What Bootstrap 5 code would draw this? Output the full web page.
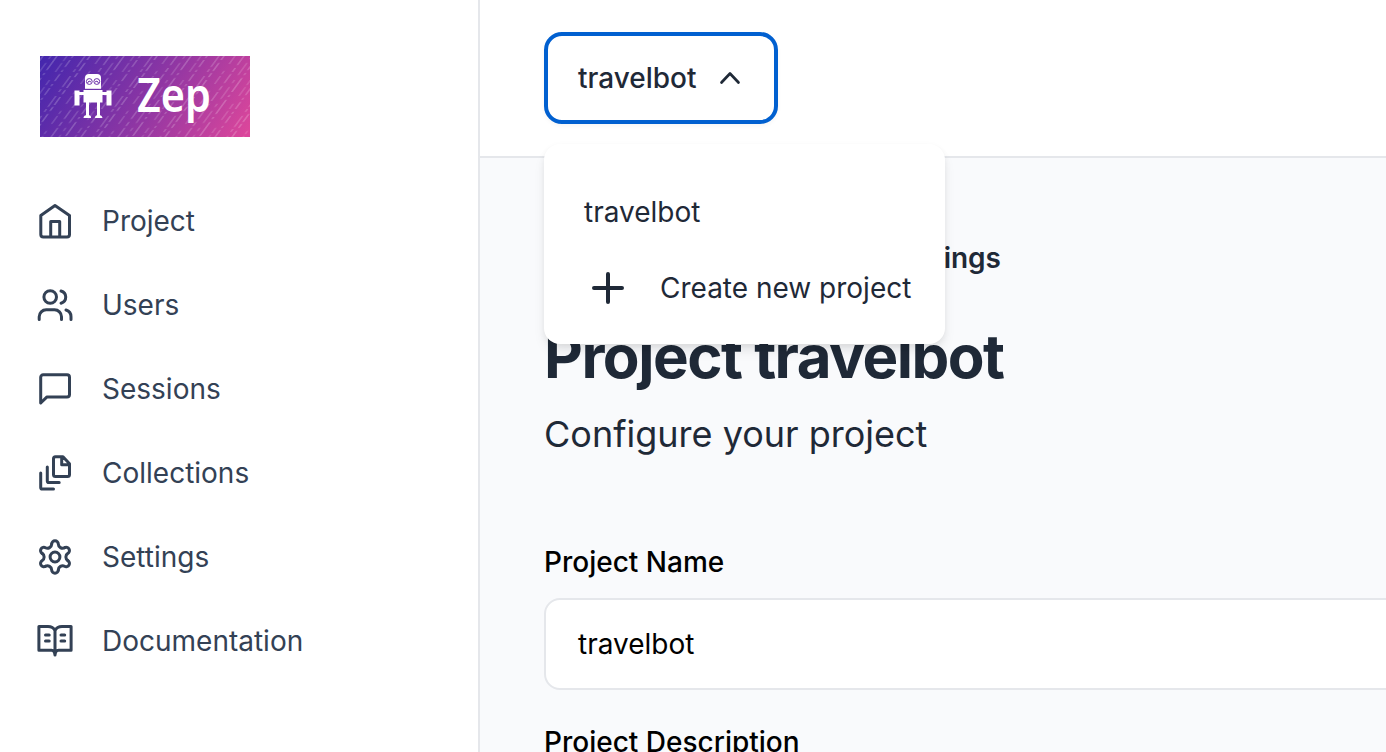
<!DOCTYPE html>
<html lang="en">
<head>
<meta charset="utf-8">
<title>Zep</title>
<link href="https://cdn.jsdelivr.net/npm/bootstrap@5.3.0/dist/css/bootstrap.min.css" rel="stylesheet">
<style>
body{font-family:Inter,"Liberation Sans",sans-serif;font-size:28px;line-height:40px;color:#1f2937;background:#fff;height:752px}
.side{width:480px;border-right:2px solid #e5e7eb;padding:56px 35px 0}
.logo{display:block;width:210px;height:81px;margin-left:5px}
.menu{margin-top:64px;gap:44px}
.menu a{color:#334155;gap:27px;height:40px;text-decoration:none}
.ico{width:40px;height:40px;fill:none;stroke:currentColor;stroke-width:3;stroke-linecap:round;stroke-linejoin:round;flex:none}
.top{height:158px;border-bottom:2px solid #e5e7eb;padding:32px 64px}
.picker{width:234px;height:92px;border:4px solid #0160d0;border-radius:18px;background:#fff;padding:0 30px;font-weight:500;color:#1f2937;box-shadow:0 2px 4px rgba(0,0,0,.04)}
.drop{position:absolute;left:0;top:112px;width:401px;height:200px;border-radius:16px;background:#fff;z-index:5;padding:48px 40px 0;box-shadow:0 8px 14px -3px rgba(0,0,0,.11),0 2px 6px rgba(0,0,0,.05)}
.pane{background:#f9fafc;padding:80px 0 0 64px}
.crumb{width:457px;font-weight:600}
h1{font-size:60px;line-height:72px;font-weight:700;margin:42px 0 0;letter-spacing:-1.5px}
.sub{font-size:36px;line-height:56px;margin-top:14px}
.lbl{font-weight:500;color:#000;line-height:40px}
.field{height:92px;width:900px;border:2px solid #e5e7eb;border-radius:16px;background:#fff;color:#000;padding:0 32px;margin:16px 0 32px}
.nowrap{white-space:nowrap}
</style>
<script src="https://cdn.jsdelivr.net/npm/bootstrap@5.3.0/dist/js/bootstrap.bundle.min.js"></script>
</head>
<body class="d-flex overflow-hidden">
<aside class="side flex-shrink-0">
  <svg class="logo" viewBox="0 0 210 81">
    <defs>
      <linearGradient id="g" gradientUnits="userSpaceOnUse" x1="15" y1="-15" x2="195" y2="96"><stop offset="0" stop-color="#4527ad"/><stop offset=".5" stop-color="#8a35a4"/><stop offset="1" stop-color="#db469b"/></linearGradient>
      <pattern id="p" width="67" height="81" patternUnits="userSpaceOnUse" patternTransform="skewX(-36)">
        <g stroke="#fff" stroke-width=".9" fill="none"><path d="M3 0V81" stroke-dasharray="9 3 4 2" opacity=".38"/><path d="M11 0V81" stroke-dasharray="3 4 12 5" opacity=".3"/><path d="M17 0V81" stroke-dasharray="14 3 2 3" opacity=".42"/><path d="M27 0V81" stroke-dasharray="5 2 9 8" opacity=".28"/><path d="M33 0V81" stroke-dasharray="2 2 7 3" opacity=".38"/><path d="M45 0V81" stroke-dasharray="11 2 3 4" opacity=".35"/><path d="M50 0V81" stroke-dasharray="4 3 8 2" opacity=".42"/><path d="M61 0V81" stroke-dasharray="8 7 3 2" opacity=".3"/></g>
      </pattern>
    </defs>
    <rect width="210" height="81" fill="url(#g)"/><rect width="210" height="81" fill="url(#p)"/>
    <g fill="#fff">
      <path d="M45 33V22q0-4 4-4h8q4 0 4 4v11z"/><path d="M43.500 34h19v12.500h-19zM34.500 34.500h5v15h-5zM66.500 34.500h5v15h-5zM39 36h5v3h-5zM62 36h5v3h-5zM46 46h3v14h-3zM57 46h3v14h-3zM43.500 62q0-3 4-3t3.500 3zM55 62q0-3 3.500-3t4 3z"/>
    </g>
    <g fill="none" stroke="#6c31a9" stroke-width="1"><circle cx="49.300" cy="25.500" r="2.900"/><circle cx="56.800" cy="25.500" r="2.900"/><path d="M47.500 27l1.500-2 2 1M55 26l2-1 1.500 2M43.500 33.300h19"/></g>
    <text x="97" y="55.500" font-family="'Noto Sans',sans-serif" font-weight="600" font-size="46" fill="#fff" textLength="74" lengthAdjust="spacingAndGlyphs">Zep</text>
  </svg>
  <nav class="menu d-flex flex-column">
    <a href="#" class="d-flex align-items-center"><svg class="ico" viewBox="0 0 40 40"><path d="M20 4.500 5.800 14.500V33.500a2.500 2.500 0 0 0 2.500 2.500H32a2.500 2.500 0 0 0 2.500-2.500V14.500zM15.700 36V20.500h9V36"/></svg><span>Project</span></a>
    <a href="#" class="d-flex align-items-center"><svg class="ico" viewBox="0 0 40 40"><circle cx="15.200" cy="12" r="6.300"/><path d="M26 6a6.300 6.300 0 0 1 0 12.200M4.200 34.500v-2.700a7 7 0 0 1 7-7h8.300a7 7 0 0 1 7 7v2.700M31 25a7 7 0 0 1 5 6.800v2.700"/></svg><span>Users</span></a>
    <a href="#" class="d-flex align-items-center"><svg class="ico" viewBox="0 0 40 40"><path d="M5.700 34V8.300a2.500 2.500 0 0 1 2.500-2.500H32a2.500 2.500 0 0 1 2.500 2.500V25.400a2.500 2.500 0 0 1-2.500 2.500H12z"/></svg><span>Sessions</span></a>
    <a href="#" class="d-flex align-items-center"><svg class="ico" viewBox="0 0 40 40"><path d="M28 3.800h-7.500a2 2 0 0 0-2 2v15.700a2 2 0 0 0 2 2h12a2 2 0 0 0 2-2V10.800zM26.700 4v7.700h7.500M12.300 14v14a1.600 1.600 0 0 0 1.600 1.600h10.300M5.700 20v14.400A1.600 1.600 0 0 0 7.300 36h11.200"/></svg><span>Collections</span></a>
    <a href="#" class="d-flex align-items-center"><svg class="ico" viewBox="-20 -20 40 40"><defs><path id="t" d="M-3.300-12.900A3.300 3.300 0 0 1 3.300-12.900C3.300-9.900 6.920-7.800 9.520-9.310"/></defs><circle r="4.900"/><use href="#t"/><use href="#t" transform="rotate(60)"/><use href="#t" transform="rotate(120)"/><use href="#t" transform="rotate(180)"/><use href="#t" transform="rotate(240)"/><use href="#t" transform="rotate(300)"/></svg><span>Settings</span></a>
    <a href="#" class="d-flex align-items-center"><svg class="ico" viewBox="0 0 40 40"><path d="M20 9.500Q18 5.500 13 5.500H3.900V29.300H16.500Q19.500 29.300 20 34 20.500 29.300 23.500 29.300H36.100V5.500H27Q22 5.500 20 9.500V34M10.500 14h3.700M10.500 20h3.700M26 14h3.700M26 20h3.700"/></svg><span>Documentation</span></a>
  </nav>
</aside>
<main class="flex-grow-1 d-flex flex-column">
  <header class="top flex-shrink-0">
    <div class="position-relative">
      <button class="picker d-flex align-items-center"><span>travelbot</span><svg class="ico ms-auto" style="width:24px;height:24px;margin-right:2px" viewBox="0 0 24 24"><path d="M3.500 16.500 12 7.500l8.500 9" stroke-width="2.700"/></svg></button>
      <div class="drop">
        <div>travelbot</div>
        <div class="d-flex align-items-center nowrap" style="margin-top:36px"><svg class="ico" style="margin:0 32px 0 4px" viewBox="0 0 40 40"><path d="M20 6v28M6 20h28" stroke-width="4"/></svg><span>Create new project</span></div>
      </div>
    </div>
  </header>
  <section class="pane flex-grow-1 nowrap">
    <div class="crumb text-end">Settings</div>
    <h1>Project travelbot</h1>
    <div class="sub">Configure your project</div>
    <div class="lbl" style="margin-top:80px">Project Name</div>
    <div class="field d-flex align-items-center">travelbot</div>
    <div class="lbl">Project Description</div>
  </section>
</main>
</body>
</html>
